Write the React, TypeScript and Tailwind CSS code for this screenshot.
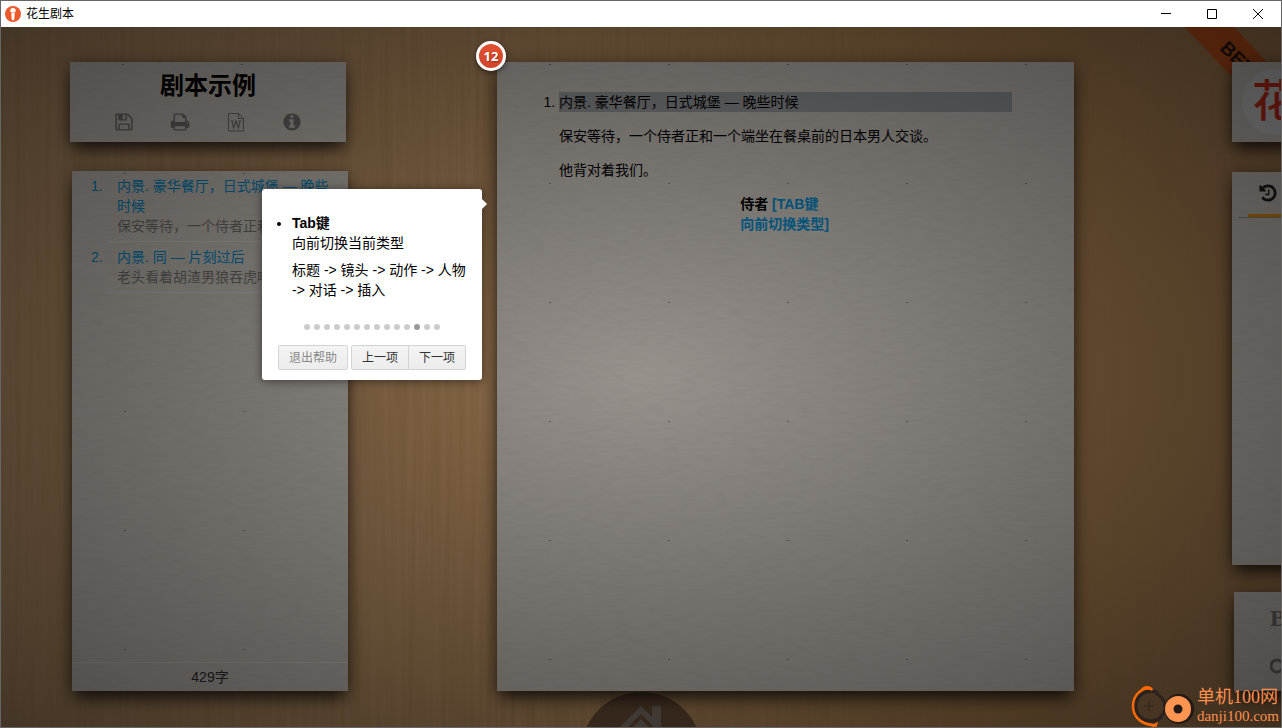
import { useState } from 'react'
import type { ReactNode } from 'react'

interface Scene {
  title: string
  summary: string
}

const STEP_COUNT = 14

const scenes: Scene[] = [
  { title: '内景. 豪华餐厅，日式城堡 — 晚些时候', summary: '保安等待，一个侍者正和一个端坐在餐桌前的日本男人交谈。' },
  { title: '内景. 同 — 片刻过后', summary: '老头看着胡渣男狼吞虎咽的样子。' },
]

const icons = {
  save: 'M512 1536h768v-384h-768v384zm896 0h128v-896q0-14-10-38.5t-20-34.5l-281-281q-10-10-34-20t-39-10v416q0 40-28 68t-68 28h-576q-40 0-68-28t-28-68v-416h-128v1280h128v-416q0-40 28-68t68-28h832q40 0 68 28t28 68v416zm-384-928v-320q0-13-9.5-22.5t-22.5-9.5h-192q-13 0-22.5 9.5t-9.5 22.5v320q0 13 9.5 22.5t22.5 9.5h192q13 0 22.5-9.5t9.5-22.5zm640 32v928q0 40-28 68t-68 28h-1344q-40 0-68-28t-28-68v-1344q0-40 28-68t68-28h928q40 0 88 20t76 48l280 280q28 28 48 76t20 88z',
  print: 'M448 1536h896v-256h-896v256zm0-640h896v-384h-160q-40 0-68-28t-28-68v-160h-640v640zm1152 64q0-26-19-45t-45-19-45 19-19 45 19 45 45 19 45-19 19-45zm128 0v416q0 13-9.5 22.5t-22.5 9.5h-224v160q0 40-28 68t-68 28h-960q-40 0-68-28t-28-68v-160h-224q-13 0-22.5-9.5t-9.5-22.5v-416q0-79 56.5-135.5t135.5-56.5h64v-544q0-40 28-68t68-28h672q40 0 88 20t76 48l152 152q28 28 48 76t20 88v256h64q79 0 135.5 56.5t56.5 135.5z',
  info: 'M1152 1376v-160q0-14-9-23t-23-9h-96v-512q0-14-9-23t-23-9h-320q-14 0-23 9t-9 23v160q0 14 9 23t23 9h96v320h-96q-14 0-23 9t-9 23v160q0 14 9 23t23 9h448q14 0 23-9t9-23zm-128-896v-160q0-14-9-23t-23-9h-192q-14 0-23 9t-9 23v160q0 14 9 23t23 9h192q14 0 23-9t9-23zm640 416q0 209-103 385.5t-279.5 279.5-385.5 103-385.5-103-279.5-279.5-103-385.5 103-385.5 279.5-279.5 385.5-103 385.5 103 279.5 279.5 103 385.5z',
  history: 'M1664 896q0 156-61 298t-164 245-245 164-298 61q-172 0-327-72.5t-264-204.5q-7-10-6.5-22.5t8.5-20.5l137-138q10-9 25-9 16 2 23 12 73 95 179 147t225 52q104 0 198.5-40.5t163.5-109.5 109.5-163.5 40.5-198.5-40.5-198.5-109.5-163.5-163.5-109.5-198.5-40.5q-98 0-188 35.5t-160 101.5l137 138q31 30 14 69-17 40-59 40h-448q-26 0-45-19t-19-45v-448q0-42 40-59 39-17 69 14l130 129q107-101 244.5-156.5t284.5-55.5q156 0 298 61t245 164 164 245 61 298zm-640-288v448q0 14-9 23t-23 9h-320q-14 0-23-9t-9-23v-64q0-14 9-23t23-9h224v-352q0-14 9-23t23-9h64q14 0 23 9t9 23z',
}

function Icon({ d, className }: { d: string; className: string }) {
  return (
    <svg viewBox="0 0 1792 1792" fill="currentColor" className={className} aria-hidden="true">
      <path d={d} />
    </svg>
  )
}

function WordIcon() {
  return (
    <svg viewBox="0 0 18 20" fill="none" stroke="currentColor" className="h-5 w-[18px]" aria-hidden="true">
      <path d="M1.500 1.500h10l5 5v12.500h-15zM11.500 1.500v5h5" />
      <path d="M3.500 9h3M7.800 9h2.400M11.500 9h3M5 9l1.500 7L9 9.500 11.500 16 13 9" strokeWidth="1.100" />
    </svg>
  )
}

// Sheet of textured paper
function Paper({ className, children }: { className: string; children?: ReactNode }) {
  return (
    <div className={`relative bg-[#d8d1c9] shadow-[0_10px_16px_-3px_rgba(0,0,0,0.7),0_0_14px_rgba(0,0,0,0.3)] ${className}`}>
      <svg className="absolute inset-0 h-full w-full" aria-hidden="true">
        <rect width="100%" height="100%" filter="url(#fibre)" />
        <rect width="100%" height="100%" fill="url(#specks)" />
      </svg>
      {children}
    </div>
  )
}

function TitleBar() {
  return (
    <header className="flex h-[26px] shrink-0 items-center bg-white pl-1 text-xs text-black">
      <svg viewBox="0 0 16 16" className="h-4 w-4" aria-hidden="true">
        <circle cx="8" cy="8" r="8" fill="#ec5a2c" />
        <path d="M5.300 4.800a2.700 2.700 0 0 1 5.400 0c0 .9-.4 1.400-.9 1.800L9.300 13a1.300 1.300 0 0 1-2.600 0l-.5-6.400c-.5-.4-.9-.9-.9-1.800z" fill="#fff" />
        <path d="M6 6.800h4" stroke="#ec5a2c" strokeWidth=".6" />
      </svg>
      <h1 className="ml-[5px] flex-1">花生剧本</h1>
      <button aria-label="最小化" className="flex h-full w-[46px] items-center justify-center">
        <svg viewBox="0 0 10 10" className="h-[10px] w-[10px]" stroke="#000"><path d="M0 4.500h10" /></svg>
      </button>
      <button aria-label="最大化" className="flex h-full w-[46px] items-center justify-center">
        <svg viewBox="0 0 10 10" className="h-[10px] w-[10px]" stroke="#000" fill="none"><path d="M.5.5h9v9h-9z" /></svg>
      </button>
      <button aria-label="关闭" className="flex h-full w-[46px] items-center justify-center">
        <svg viewBox="0 0 10 10" className="h-[10px] w-[10px]" stroke="#000"><path d="M0 0l10 10M10 0L0 10" /></svg>
      </button>
    </header>
  )
}

function Sidebar() {
  return (
    <aside className="ml-[69px] flex w-[278px] shrink-0 flex-col gap-[29px]">
      <Paper className="h-20 w-[276px] shrink-0">
        <div className="relative pt-1">
          <h2 className="text-center text-2xl/10 font-bold text-black">剧本示例</h2>
          <div className="flex justify-between px-11 text-[#7c7974]">
            <button aria-label="保存" className="flex h-8 w-5 items-center justify-center"><Icon d={icons.save} className="h-5 w-5" /></button>
            <button aria-label="打印" className="flex h-8 w-5 items-center justify-center"><Icon d={icons.print} className="h-5 w-5" /></button>
            <button aria-label="导出Word" className="flex h-8 w-5 items-center justify-center"><WordIcon /></button>
            <button aria-label="信息" className="flex h-8 w-5 items-center justify-center"><Icon d={icons.info} className="h-5 w-5" /></button>
          </div>
        </div>
      </Paper>
      <Paper className="ml-[2px] flex w-[276px] flex-1 flex-col">
        <ol className="relative flex-1 pr-[10px] pl-[19px]">
          {scenes.map((scene, i) => (
            <li key={scene.title} className="flex text-[#0090d4]">
              <span className="w-4 shrink-0 pt-[5px]">{i + 1}.</span>
              <div className="min-w-0 flex-1 border-b border-[#e2e0e0] py-[5px] pl-[10px]">
                <a href="#scene" className="block">{scene.title}</a>
                <p className="truncate text-[#7c7a78]">{scene.summary}</p>
              </div>
            </li>
          ))}
        </ol>
        <footer className="relative border-t border-[#e6e2e0] py-1 text-center text-[#333]">429字</footer>
      </Paper>
    </aside>
  )
}

function HelpTip({ step, onStep }: { step: number; onStep: (step: number) => void }) {
  const button = 'border border-[#d4d4d4] bg-linear-to-b from-[#f4f4f4] to-[#ececec] px-[10px] pt-px text-xs/[22px] text-[#333]'

  return (
    <>
      <span className="absolute -top-[21px] -left-[21px] z-20 flex h-[30px] w-[30px] items-center justify-center rounded-full border-3 border-white bg-linear-to-b from-[#e2512f] to-[#d0452c] font-['Open_Sans',sans-serif] text-[13px]/none font-bold text-white shadow-[0_2px_5px_rgba(0,0,0,0.5)] text-shadow-[1px_1px_1px_rgba(0,0,0,0.3)]">
        {step}
      </span>
      <div role="dialog" aria-label="帮助" className="absolute top-[127px] right-[calc(100%+15px)] z-20 w-[220px] rounded-[3px] bg-white px-4 pt-6 pb-[10px] text-black shadow-[0_1px_10px_rgba(0,0,0,0.5)]">
        <span className="absolute top-[10px] left-full border-y-5 border-l-5 border-y-transparent border-l-white" />
        <ul className="list-disc pl-[14px]">
          <li>
            <strong>Tab键</strong>
            <p>向前切换当前类型</p>
            <p className="mt-[7px]">标题 -&gt; 镜头 -&gt; 动作 -&gt; 人物 -&gt; 对话 -&gt; 插入</p>
          </li>
        </ul>
        <div className="mt-6 flex justify-center gap-1">
          {Array.from({ length: STEP_COUNT }, (_, i) => (
            <button
              key={i}
              aria-label={`第${i + 1}项`}
              onClick={() => onStep(i + 1)}
              className={i + 1 === step ? 'h-[6px] w-[6px] rounded-full bg-[#999]' : 'h-[6px] w-[6px] rounded-full bg-[#ccc]'}
            />
          ))}
        </div>
        <div className="mt-[15px] flex justify-between">
          <button className={`${button} rounded-[2px] text-[#888]!`}>退出帮助</button>
          <div className="flex">
            <button className={`${button} rounded-l-[2px]`} onClick={() => onStep(Math.max(1, step - 1))}>上一项</button>
            <button className={`${button} -ml-px rounded-r-[2px]`} onClick={() => onStep(Math.min(STEP_COUNT, step + 1))}>下一项</button>
          </div>
        </div>
      </div>
    </>
  )
}

function Script({ children }: { children: ReactNode }) {
  return (
    <Paper className="mr-[158px] ml-[149px] min-w-0 flex-1 px-[62px] pt-[30px]">
      <ol className="relative list-decimal text-black">
        <li>
          <h3 className="bg-[#a3a5a8]">{scenes[0].title}</h3>
          <p className="mt-[14px]">{scenes[0].summary}</p>
          <p className="mt-[14px]">他背对着我们。</p>
          <p className="mt-[14px] ml-[40%] w-[90px] font-bold">
            侍者 <span className="text-[#0090d4]">[TAB键向前切换类型]</span>
          </p>
        </li>
      </ol>
      {children}
    </Paper>
  )
}

// Tool column, most of it runs past the window's right edge
function Tools() {
  return (
    <aside className="flex w-[49px] shrink-0 flex-col">
      <Paper className="h-20 w-[276px] shrink-0">
        <div className="relative flex h-full items-center pl-[10px]">
          <div className="absolute h-[66px] w-[66px] rounded-full bg-[#e0dedf]" />
          <span className="relative pl-[10px] text-[44px]/none font-medium text-[#d8321e]">花生</span>
        </div>
      </Paper>
      <Paper className="mt-[30px] w-[276px] flex-1">
        <div className="relative ml-[6px] flex h-[46px] border-b border-[#999]">
          <button aria-label="历史" className="ml-[10px] flex w-[100px] items-center border-b-3 border-[#f39c00] pl-[10px] text-[#222]">
            <Icon d={icons.history} className="h-5 w-5" />
          </button>
        </div>
      </Paper>
      <Paper className="mt-[27px] ml-[2px] h-[99px] w-[276px] shrink-0">
        <div className="relative flex flex-col items-start gap-[26px] pt-[14px] pl-9 text-[#7c7974]">
          <button aria-label="加粗" className="font-['Liberation_Serif',serif] text-2xl/6 font-bold">B</button>
          <button aria-label="搜索">
            <svg viewBox="0 0 20 20" className="h-5 w-5" fill="none" stroke="currentColor" strokeWidth="3">
              <circle cx="7" cy="10" r="6" />
              <path d="M11.500 14.500l6 5" />
            </svg>
          </button>
        </div>
      </Paper>
    </aside>
  )
}

function Watermark() {
  return (
    <div className="absolute right-[2px] bottom-0 z-20 flex items-center gap-[2px] text-[#fb8f4e]">
      <svg viewBox="0 0 64 42" className="h-[42px] w-16" fill="none" aria-hidden="true">
        <path d="M27 8A15 15 0 1 0 31 31" stroke="#2b2220" strokeWidth="3.500" />
        <path d="M26 9c5 3 8 8 8 13M31 30c4-4 4-12 10-18" stroke="#2b2220" strokeWidth="3" strokeLinecap="round" />
        <path d="M13 21h10M18 16v10" stroke="#3a2b20" strokeWidth="1.800" />
        <path d="M18 3C8 4 2 12 2 21c0 11 8 18 20 19" stroke="#ff6a00" strokeWidth="2.500" />
        <path d="M9 6c2-5 9-7 13-2l-1 2c-4-2-7-1-12 0zM17 38c4 2 6 1 10-1l-1 4c-2 2-8 1-9-3z" fill="#ff6a00" />
        <circle cx="48" cy="24" r="15" fill="#221a18" />
        <circle cx="47" cy="24" r="13" fill="#ff9550" />
        <circle cx="47" cy="24" r="4.500" fill="#221a18" />
      </svg>
      <p className="font-['Liberation_Serif','Noto_Sans_CJK_SC',serif]">
        <span className="block text-lg/[20px]">单机100网</span>
        <span className="block text-[15px]/[18px]">danji100.com</span>
      </p>
    </div>
  )
}

export default function App() {
  const [step, setStep] = useState(12)

  return (
    <div className="flex h-screen flex-col border border-[#666] font-['Liberation_Sans','Noto_Sans_CJK_SC',sans-serif] text-sm/5">
      <TitleBar />
      <main className="relative flex flex-1 overflow-hidden bg-[#c79f70] bg-[linear-gradient(90deg,#c39b70,#cb9c6c_40%,#b98855_80%,#b38659)] pt-[35px] pb-9">
        {/* Wood grain and paper fibre */}
        <svg className="absolute inset-0 h-full w-full" aria-hidden="true">
          <filter id="wood" x="0" y="0" width="100%" height="100%">
            <feTurbulence type="fractalNoise" baseFrequency="0.2 0.004" numOctaves="3" seed="4" />
            <feColorMatrix values="0 0 0 0 0.42  0 0 0 0 0.24  0 0 0 0 0.08  0.8 0 0 0 -0.25" />
          </filter>
          <filter id="fibre" x="0" y="0" width="100%" height="100%">
            <feTurbulence type="fractalNoise" baseFrequency="0.06 0.3" numOctaves="3" seed="9" />
            <feColorMatrix values="0 0 0 0 0.3  0 0 0 0 0.28  0 0 0 0 0.25  0.2 0 0 0 -0.08" />
          </filter>
          <pattern id="specks" width="119" height="119" patternUnits="userSpaceOnUse">
            <path d="M52 2.500h2" stroke="#8a8680" />
          </pattern>
          <rect width="100%" height="100%" filter="url(#wood)" />
        </svg>

        {/* Corner ribbon */}
        <svg viewBox="0 0 100 130" className="absolute top-0 right-0 h-[130px] w-[100px]">
          <path d="M3 0h50l47 50v50z" fill="#d65a1e" />
          <text transform="translate(38 22) rotate(45)" fontSize="19" fontWeight="bold" fill="#2a1c16">BETA</text>
        </svg>

        {/* Home button */}
        <a href="#home" aria-label="首页" className="absolute -bottom-[86px] left-1/2 -ml-[60px] h-[121px] w-[121px] rounded-full bg-[#5c4230]/75">
          <svg viewBox="0 0 60 60" className="absolute top-[14px] left-[30px] h-[60px] w-[60px]" fill="#8d8078">
            <path d="M0 30L30 0l11 11V0h9v20l10 10-4 4L30 8 4 34z" />
            <path d="M9 34l21-21 21 21v26H9z" />
          </svg>
        </a>

        <Sidebar />
        <Script>
          <HelpTip step={step} onStep={setStep} />
        </Script>
        <Tools />

        <div className="pointer-events-none absolute inset-0 z-10 bg-[radial-gradient(ellipse_at_center,rgba(0,0,0,0.3),rgba(0,0,0,0.65))]" />
        <Watermark />
      </main>
    </div>
  )
}
